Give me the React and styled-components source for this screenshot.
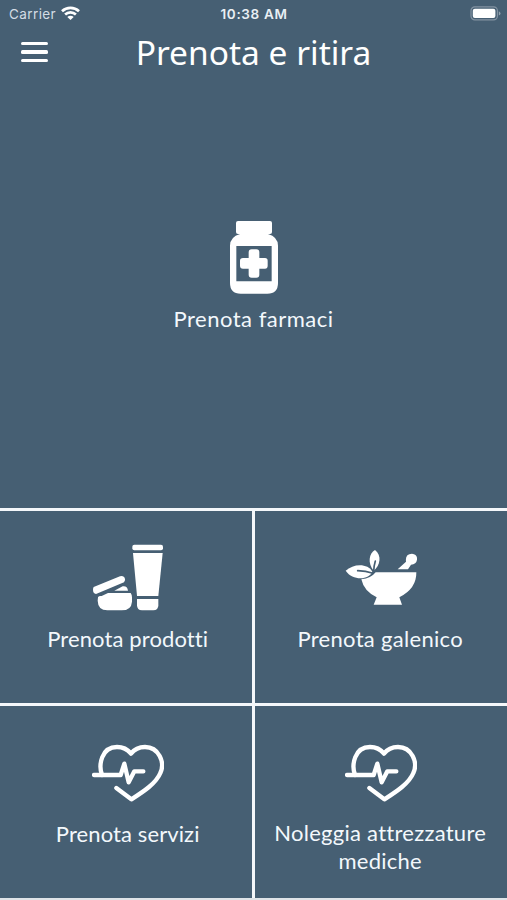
import React from "react";
import styled, { createGlobalStyle } from "styled-components";

const GlobalStyle = createGlobalStyle`
  body {
    margin: 0;
    background: #465f73;
  }
`;

const Screen = styled.div`
  display: flex;
  flex-direction: column;
  height: 900px;
  box-sizing: border-box;
  overflow: hidden;
  border-bottom: 2px solid #dfe4e8;
  background: #465f73;
  color: #fff;
`;

const StatusBar = styled.div`
  display: grid;
  grid-template-columns: 1fr auto 1fr;
  align-items: center;
  height: 27px;
  padding: 0 6px 0 9px;
  font-family: Inter, "Liberation Sans", sans-serif;
  font-size: 13.5px;
  color: #e9eff4;

  svg {
    display: block;
  }
`;

const Carrier = styled.div`
  display: flex;
  align-items: center;
  gap: 5px;
  letter-spacing: 0.4px;
  color: #d3dce4;
`;

const Time = styled.div`
  margin-right: 2px;
  font-weight: 600;
  letter-spacing: 0.65px;
`;

const Battery = styled.div`
  justify-self: end;
`;

const Header = styled.header`
  display: grid;
  grid-template-columns: 48px 1fr 48px;
  align-items: center;
  height: 50px;
`;

const MenuButton = styled.button`
  display: flex;
  flex-direction: column;
  gap: 5px;
  width: 27px;
  margin: 0 0 0 20.5px;
  padding: 0;
  border: 0;
  background: none;
`;

const MenuLine = styled.span`
  height: 3.3px;
  border-radius: 1.5px;
  background: #fff;
`;

const Title = styled.h1`
  margin: 0;
  text-align: center;
  font-family: "Noto Sans", "Open Sans", sans-serif;
  font-size: 33.5px;
  font-weight: 400;
  line-height: 50px;
`;

const Tile = styled.div`
  display: flex;
  flex-direction: column;
  align-items: center;
  box-sizing: border-box;
  padding-top: ${(props) => props.$top}px;

  svg {
    display: block;
    flex: none;
  }
`;

const Hero = styled(Tile)`
  height: 431px;
`;

const Grid = styled.div`
  display: grid;
  grid-template-columns: 252.4px 251.6px;
  grid-template-rows: 192px 192px;
  gap: 3px;
  padding-top: 3px;
  background: #f4f7fa;

  ${Tile} {
    background: #465f73;
  }

  ${Tile}:nth-child(odd) {
    padding-left: 3px;
  }
`;

const Label = styled.div`
  margin-top: ${(props) => props.$gap}px;
  max-width: 230px;
  text-align: center;
  font-family: Lato, sans-serif;
  font-size: 22px;
  line-height: 28px;
  letter-spacing: ${(props) => props.$spacing}px;
  color: #f3f8fc;

  ${Tile}:nth-child(even) > & {
    margin-right: 2px;
  }
`;

function WifiIcon() {
  return (
    <svg width="19" height="15" viewBox="0 0 19 15" fill="none" stroke="#fff" strokeWidth="2.7">
      <path d="M1 5.2C5.8 .7 13.2 .7 18 5.2" />
      <path d="M4.1 8.6C7.2 5.7 11.8 5.7 14.9 8.6" />
      <path d="M6.3 10.9C8.1 9.2 10.9 9.2 12.7 10.9L9.5 14.1Z" fill="#fff" stroke="none" />
    </svg>
  );
}

function BatteryIcon() {
  return (
    <svg width="31" height="15" viewBox="0 0 31 15">
      <rect x="1" y=".9" width="26.4" height="13" rx="3.8" fill="none" stroke="#8393a2" strokeWidth="1.2" />
      <rect x="2.8" y="2.7" width="22.6" height="9.4" rx="2" fill="#fff" />
      <path d="M28.8 5.2Q30.5 5.9 30.5 7.4T28.8 9.6Z" fill="#92a2af" />
    </svg>
  );
}

function JarIcon() {
  return (
    <svg width="48" height="74" viewBox="30 15 144 222" fill="#fff">
      <rect x="48" y="18" width="108" height="39" rx="6" />
      <path d="M60 50H144V57Q174 66 174 92V204Q174 236 142 236H62Q30 236 30 204V92Q30 66 60 57Z" />
      <path d="M49 93H155V199H49Z" fill="#465f73" />
      <path d="M95 103H109Q118 103 118 112V129H135Q143 129 143 137V152Q143 161 135 161H118V179Q118 188 109 188H95Q86 188 86 179V161H69Q60 161 60 152V137Q60 129 69 129H86V112Q86 103 95 103Z" />
    </svg>
  );
}

function CosmeticsIcon() {
  return (
    <svg width="70" height="67" viewBox="24 12 210 201" fill="#fff">
      <rect x="142" y="14" width="92" height="17" rx="6" />
      <path d="M144 39H233L220 168H156Z" />
      <path d="M156 177H220V196Q220 211 205 211H171Q156 211 156 196Z" />
      <path d="M26 141L105 109Q114 105 119 113Q123 121 117 127L33 162Q24 160 24 149Q24 144 26 141Z" />
      <path d="M88 152L113 139Q127 137 129 152Z" />
      <path d="M39 172Q41 167 50 168L69 159H137Q141 164 141 172V185Q139 211 110 211H67Q39 211 38 182Z" />
    </svg>
  );
}

function MortarIcon() {
  return (
    <svg width="72" height="55" viewBox="15 17 216 165" fill="#fff">
      <path d="M64 105Q93 102 107 84H229Q230 133 178 159L186 181H101L110 159Q72 141 64 105Z" />
      <path d="M173 75L198 52Q195 28 216 28Q233 30 231 46Q229 60 213 61Q209 67 204 75Z" />
      <path d="M17 79C40 57 84 56 97 82C88 106 39 111 17 79Z" />
      <path d="M101 79C82 57 87 26 105 17C126 33 121 63 101 79Z" />
      <path d="M53 79Q77 79 99 87M101 82Q102 62 106 50" fill="none" stroke="#465f73" strokeWidth="5" strokeLinecap="round" />
    </svg>
  );
}

function HeartPulseIcon() {
  return (
    <svg
      width="72"
      height="58"
      viewBox="21 17 216 174"
      fill="none"
      stroke="#fff"
      strokeWidth="13"
      strokeLinecap="round"
      strokeLinejoin="round"
    >
      <path d="M51 110C40 80 49 26 96 26Q122 26 138 46Q153 26 180 26C221 26 241 72 226 104C213 136 173 161 139 183L94 149" />
      <path d="M27 110H107L118 76L131 132L148 99H175" />
    </svg>
  );
}

function App() {
  return (
    <>
      <GlobalStyle />
      <Screen>
        <StatusBar>
          <Carrier>
            Carrier
            <WifiIcon />
          </Carrier>
          <Time>10:38 AM</Time>
          <Battery>
            <BatteryIcon />
          </Battery>
        </StatusBar>
        <Header>
          <MenuButton aria-label="Menu">
            <MenuLine />
            <MenuLine />
            <MenuLine />
          </MenuButton>
          <Title>Prenota e ritira</Title>
        </Header>
        <Hero $top={143}>
          <JarIcon />
          <Label $gap={11} $spacing={0.5}>Prenota farmaci</Label>
        </Hero>
        <Grid>
          <Tile $top={33}>
            <CosmeticsIcon />
            <Label $gap={14} $spacing={0.12}>Prenota prodotti</Label>
          </Tile>
          <Tile $top={39}>
            <MortarIcon />
            <Label $gap={20} $spacing={0.3}>Prenota galenico</Label>
          </Tile>
          <Tile $top={38}>
            <HeartPulseIcon />
            <Label $gap={18} $spacing={0.1}>Prenota servizi</Label>
          </Tile>
          <Tile $top={38}>
            <HeartPulseIcon />
            <Label $gap={17} $spacing={0.27}>Noleggia attrezzature mediche</Label>
          </Tile>
        </Grid>
      </Screen>
    </>
  );
}

export default App;
